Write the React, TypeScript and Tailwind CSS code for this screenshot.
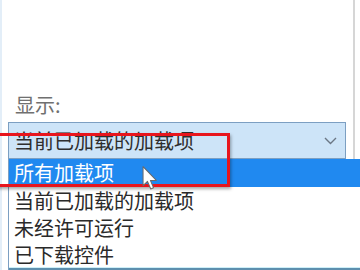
import React from "react";

const font = { fontFamily: '"Microsoft YaHei", "Noto Sans CJK SC", "Noto Sans", sans-serif' };

export default function App() {
  const items = ["所有加载项", "当前已加载的加载项", "未经许可运行", "已下载控件"];
  return (
    <div className="relative w-[360px] h-[270px] overflow-hidden bg-white" style={font}>
      <div className="w-[355px] h-full border-l-2 border-l-[#e3eef8] border-r-2 border-r-[#d6d6d6] pt-[93px] pl-[6px]">
        <div className="pl-[7px] text-[20px] leading-[24px] text-[#707070]">显示:</div>
        <div className="mt-[5px] w-[338px] h-[37px] border border-[#7c9fc2] bg-[#cde4f8] flex items-center justify-between pl-[5px] pr-[8px]">
          <span className="text-[20px] leading-[24px] text-[#2e2e2e]">当前已加载的加载项</span>
          <svg width="13" height="8" viewBox="0 0 13 8" fill="none">
            <path d="M1 1 L6.5 6.5 L12 1" stroke="#6b7785" strokeWidth="1.4" />
          </svg>
        </div>
      </div>

      {/* dropdown list */}
      <div className="absolute left-[8px] top-[159px] right-[-4px] bottom-0 bg-white border-l border-[#7c9fc2] flex flex-col">
        {items.map((t, i) => (
          <div
            key={t}
            className={
              i === 0
                ? "h-[28px] shrink-0 flex items-center pl-[5px] bg-[#2089f0] text-white text-[20px] leading-[24px]"
                : "h-[27px] shrink-0 flex items-center pl-[5px] text-[#2a2a2a] text-[20px] leading-[24px]"
            }
          >
            {t}
          </div>
        ))}
        <div className="absolute left-0 right-0 bottom-0 h-[3px] border-t border-[#cdeff8] bg-[#5d8fae]" />
      </div>

      {/* red highlight box */}
      <div className="absolute left-[-4px] top-[133px] w-[234px] h-[54px] border-[3px] border-[#e8151d] shadow-[1px_2px_3px_rgba(0,0,0,0.35)]" />

      {/* cursor */}
      <svg className="absolute left-[142px] top-[166px]" width="16" height="24" viewBox="0 0 12 19">
        <path
          d="M0.5 0.5 L0.5 15.5 L4 12.2 L6.6 18.2 L8.8 17.2 L6.3 11.4 L11 11.4 Z"
          fill="#ffffff"
          stroke="#6a6a6a"
          strokeWidth="0.8"
          strokeLinejoin="round"
        />
      </svg>
    </div>
  );
}
